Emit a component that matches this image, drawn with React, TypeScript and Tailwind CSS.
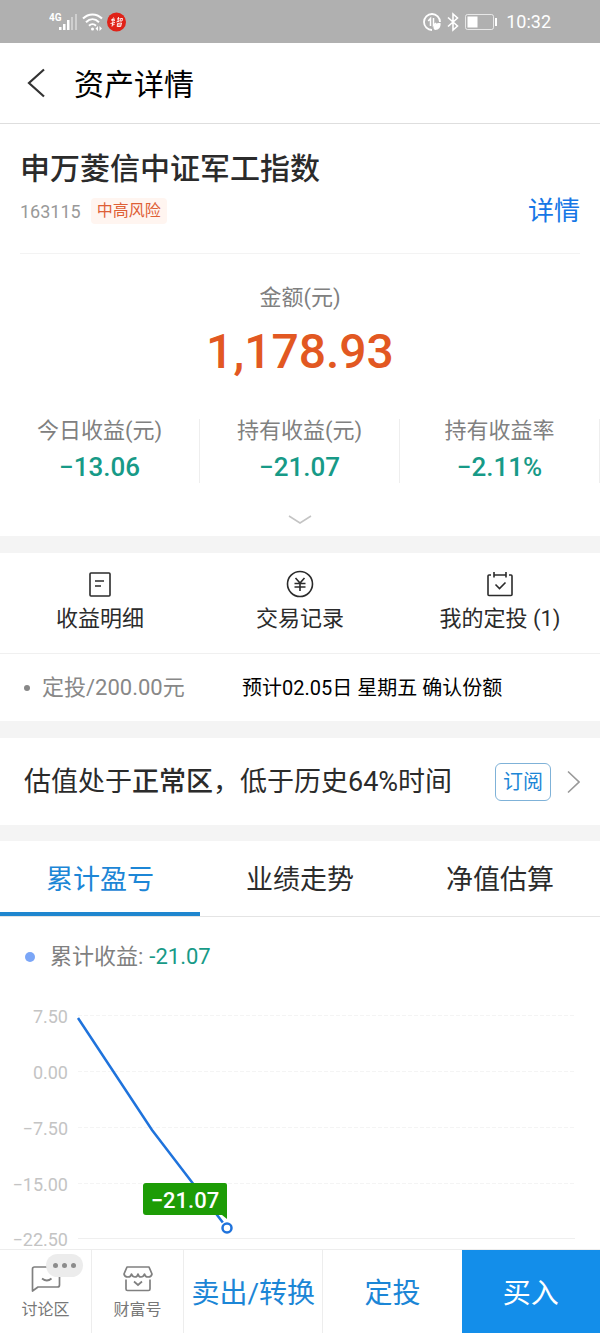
import React, { useState } from 'react';

const stats = [
  { label: '今日收益(元)', value: '−13.06' },
  { label: '持有收益(元)', value: '−21.07' },
  { label: '持有收益率', value: '−2.11%' },
];

const tabs = ['累计盈亏', '业绩走势', '净值估算'];

const axis = [
  { label: '7.50', y: 20 },
  { label: '0.00', y: 76 },
  { label: '−7.50', y: 132 },
  { label: '−15.00', y: 188 },
  { label: '−22.50', y: 243 },
];

const StatusBar: React.FC = () => (
  <div className="flex h-[43px] items-center justify-between bg-[#b0b0b0] px-[49px] text-white">
    <div className="flex items-center gap-1">
      <svg width="29" height="20" viewBox="0 0 29 20" fill="currentColor" aria-hidden="true">
        <text x="0" y="9" fontSize="10" fontWeight="700" fontFamily="Roboto, sans-serif">4G</text>
        <rect x="10" y="15" width="2.5" height="3" />
        <rect x="14" y="12" width="2.5" height="6" />
        <rect x="18" y="8" width="2.5" height="10" />
        <rect x="22" y="5" width="2" height="13" opacity="0.4" />
        <rect x="26" y="2" width="2" height="16" opacity="0.4" />
      </svg>
      <svg width="21" height="20" viewBox="0 0 21 20" fill="none" stroke="currentColor" strokeWidth="2" aria-hidden="true">
        <path d="M1 6.5C6.5 1 14.5 1 20 6.5" />
        <path d="M4 10.2C8 6.3 13 6.3 17 10.2" />
        <path d="M7 13.7C9 11.8 12 11.8 14 13.7" />
        <circle cx="10.5" cy="17" r="1.5" fill="currentColor" stroke="none" />
        <path d="M16 14v5l-2.5-2.5zM17.5 14v5l2.5-2.5z" fill="currentColor" stroke="none" />
      </svg>
      <svg width="19" height="20" viewBox="0 0 19 20" aria-hidden="true">
        <circle cx="9.5" cy="10" r="9.5" fill="#e02218" />
        <g stroke="#fff" strokeWidth="0.9" fill="none">
          <path d="M4 8l4-1M6.5 5.500L5 9l3-.5M3.500 11.500l4.500-1M6 9.500l-1 5M5 13l2.500-.5" />
          <path d="M10 7l2.500-.5M11.500 5l-.5 5M9.500 10l3-1M13.500 6.500l2 0-.5 2.500-2 0zM10.500 11.500l4-.5-.8 3.500-3.500 0zM10.500 13h3.500" />
        </g>
      </svg>
    </div>
    <div className="flex items-center gap-1">
      <svg width="19" height="20" viewBox="0 0 19 20" fill="none" stroke="currentColor" strokeWidth="1.8" aria-hidden="true">
        <path d="M17 10A8 8 0 1 0 9 18" />
        <path d="M7.5 14V6.500L5.200 9M10.500 6v7.500l2.500-2.500" strokeWidth="1.5" />
        <path d="M17.5 11c-5 0-7 1.500-7 4.500 0 1 .5 2 1.500 2.500 4 0 6-3 5.500-7z" fill="currentColor" stroke="none" />
      </svg>
      <svg width="14" height="20" viewBox="0 0 14 20" fill="none" stroke="currentColor" strokeWidth="1.6" aria-hidden="true">
        <path d="M2 5.500l9.500 8.500L7 18V2l4.500 4L2 14.500" />
      </svg>
      <svg width="34" height="20" viewBox="0 0 34 20" fill="none" stroke="currentColor" aria-hidden="true">
        <rect x="1.5" y="2.5" width="28" height="15" rx="2" opacity="0.7" />
        <rect x="3.5" y="4.5" width="10" height="11" fill="currentColor" stroke="none" />
        <path d="M32 6v8" strokeWidth="2" />
      </svg>
      <span className="pl-1 text-[18px] leading-6">10:32</span>
    </div>
  </div>
);

const ProfitChart: React.FC = () => (
  <svg viewBox="0 0 600 254" className="block w-full" role="img" aria-label="累计收益">
    {axis.map((tick, i) => (
      <g key={tick.label}>
        <line
          x1="78"
          x2="575"
          y1={tick.y + 0.5}
          y2={tick.y + 0.5}
          stroke={i === axis.length - 1 ? '#efefef' : '#f4f4f4'}
          strokeDasharray={i === axis.length - 1 ? undefined : '4 2'}
        />
        <text x="68" y={tick.y + 8} textAnchor="end" fontSize="18" fill="#c4c4c4">
          {tick.label}
        </text>
      </g>
    ))}
    <polyline points="78,23 152,135 227,233" fill="none" stroke="#1f73dc" strokeWidth="2.5" />
    <path d="M146 188h79a2 2 0 0 1 2 2v34l-5-4h-76a3 3 0 0 1-3-3v-26a3 3 0 0 1 3-3z" fill="#1d9c06" />
    <text x="185" y="213" textAnchor="middle" fontSize="22" fontWeight="500" fill="#fff">
      −21.07
    </text>
    <circle cx="227" cy="233" r="7" fill="#fff" />
    <circle cx="227" cy="233" r="4.5" fill="#fff" stroke="#1f73dc" strokeWidth="2.5" />
  </svg>
);

const App: React.FC = () => {
  const [active, setActive] = useState(tabs[0]);

  return (
    <div className="flex min-h-screen flex-col bg-white font-[Roboto,'Noto_Sans_CJK_SC',sans-serif] text-[#2b2b2b]">
      <StatusBar />

      <header className="flex h-[81px] items-center gap-7 border-b border-[#dedede] px-[27px]">
        <button type="button" aria-label="返回">
          <svg width="19" height="30" viewBox="0 0 19 30" fill="none" stroke="#333" strokeWidth="2.2">
            <path d="M17 1.500L2 15l15 13.500" />
          </svg>
        </button>
        <h1 className="pt-1 text-[30px] leading-10 text-black">资产详情</h1>
      </header>

      <section className="px-5 pt-[25px]">
        <h2 className="text-[30px] font-medium leading-10">申万菱信中证军工指数</h2>
        <div className="flex items-center justify-between border-b border-[#f3f3f3] pb-[22px] pt-[2px]">
          <div className="flex items-center gap-[10px]">
            <span className="text-[18px] text-[#999]">163115</span>
            <span className="rounded-sm bg-[#fff5f0] px-[6px] text-base leading-[26px] text-[#de6036]">中高风险</span>
          </div>
          <a href="#detail" className="text-[26px] leading-10 text-[#1677e6]">详情</a>
        </div>
      </section>

      <section className="flex flex-col items-center pt-7">
        <p className="text-[22px] leading-8 text-[#808080]">金额(元)</p>
        <p className="pt-2 text-5xl font-medium leading-[60px] text-[#e25822]">1,178.93</p>
        <div className="grid w-full grid-cols-3 pt-[37px]">
          {stats.map((stat) => (
            <div key={stat.label} className="flex flex-col items-center gap-2 border-r border-[#eee]">
              <span className="text-[22px] leading-6 text-[#808080]">{stat.label}</span>
              <span className="text-[26px] font-medium leading-8 text-[#179a87]">{stat.value}</span>
            </div>
          ))}
        </div>
        <button type="button" aria-label="展开" className="px-4 pb-3 pt-8">
          <svg width="24" height="9" viewBox="0 0 24 9" fill="none" stroke="#c4c4c4" strokeWidth="1.5">
            <path d="M1 1l11 7L23 1" />
          </svg>
        </button>
      </section>

      <section className="border-t-[17px] border-[#f4f4f4]">
        <div className="grid grid-cols-3 border-b border-[#f0f0f0] pb-[18px] pt-4 text-[22px] leading-8">
          <button type="button" className="flex flex-col items-center gap-1">
            <svg width="30" height="30" viewBox="0 0 30 30" fill="none" stroke="#2b2b2b" strokeWidth="1.6">
              <rect x="5" y="4" width="20" height="23" rx="1" />
              <path d="M10 12h9M10 17h6" />
            </svg>
            收益明细
          </button>
          <button type="button" className="flex flex-col items-center gap-1">
            <svg width="30" height="30" viewBox="0 0 30 30" fill="none" stroke="#2b2b2b" strokeWidth="1.6">
              <circle cx="15" cy="15" r="12.5" />
              <path d="M10.5 9l4.500 5 4.500-5M15 14v8M9.500 14.500h11M9.500 18h11" />
            </svg>
            交易记录
          </button>
          <button type="button" className="flex flex-col items-center gap-1">
            <svg width="30" height="30" viewBox="0 0 30 30" fill="none" stroke="#2b2b2b" strokeWidth="1.6">
              <path d="M9 6h12M24 6h2q1 0 1 1v18.500q0 1-1 1H4q-1 0-1-1V7q0-1 1-1h2M9 3v5.500M21 3v5.500" />
              <path d="M10.5 15.500l4 4 6-6" />
            </svg>
            我的定投 (1)
          </button>
        </div>
        <div className="flex h-[67px] items-center px-6">
          <span className="mr-3 h-[6px] w-[6px] rounded-full bg-[#888]" />
          <span className="w-[200px] text-[22px] text-[#888]">定投/200.00元</span>
          <span className="text-xl text-black">预计02.05日 星期五 确认份额</span>
        </div>
      </section>

      <section className="flex h-[104px] items-center justify-between border-t-[17px] border-[#f4f4f4] pl-6 pr-5">
        <p className="text-[27px] leading-10">
          估值处于<strong className="font-medium">正常区</strong>，低于历史64%时间
        </p>
        <div className="flex items-center gap-4">
          <button type="button" className="h-[38px] rounded-md border border-[#7fb2d8] px-[7px] text-xl text-[#1c86d6]">
            订阅
          </button>
          <svg width="13" height="24" viewBox="0 0 13 24" fill="none" stroke="#999" strokeWidth="1.6" aria-hidden="true">
            <path d="M1 1.500L12 12 1 22.500" />
          </svg>
        </div>
      </section>

      <section className="border-t-[16px] border-[#f4f4f4]">
        <div role="tablist" className="grid h-[76px] grid-cols-3 border-b border-[#e4e4e4]">
          {tabs.map((tab) => (
            <button
              key={tab}
              type="button"
              role="tab"
              aria-selected={tab === active}
              onClick={() => setActive(tab)}
              className={
                tab === active
                  ? 'border-b-4 border-[#1f86cf] pt-2 text-[27px] text-[#1c86d6]'
                  : 'border-b-4 border-transparent pt-2 text-[27px]'
              }
            >
              {tab}
            </button>
          ))}
        </div>
        <div className="flex items-center px-[25px] pb-[22px] pt-6 text-[22px] leading-8 text-[#808080]">
          <span className="mr-[15px] h-[10px] w-[10px] rounded-full bg-[#7ba6f7]" />
          累计收益:
          <span className="pl-[6px] text-[#179a87]">-21.07</span>
        </div>
        <ProfitChart />
      </section>

      <nav className="sticky bottom-0 flex h-[84px] border-t border-[#ededed] bg-white text-[28px] text-[#1c86d6]">
        <button type="button" className="relative flex w-[92px] flex-col items-center gap-1 border-r border-[#ededed] pt-[14px] text-base leading-6 text-[#777]">
          <svg width="30" height="30" viewBox="0 0 30 30" fill="none" stroke="#808080" strokeWidth="1.7">
            <path d="M1.5 27V5q0-2 2-2h23q2 0 2 2v16q0 2-2 2H7z" strokeLinejoin="round" />
            <path d="M11 14.500q5 4 9.500 0" />
          </svg>
          讨论区
          <span className="absolute right-2 top-1 flex h-[23px] w-[37px] items-center justify-center gap-1 rounded-full bg-[#ececec]">
            <i className="h-[5px] w-[5px] rounded-full bg-[#8c8c8c]" />
            <i className="h-[5px] w-[5px] rounded-full bg-[#8c8c8c]" />
            <i className="h-[5px] w-[5px] rounded-full bg-[#8c8c8c]" />
          </span>
        </button>
        <button type="button" className="flex w-[92px] flex-col items-center gap-1 border-r border-[#ededed] pt-[14px] text-base leading-6 text-[#777]">
          <svg width="30" height="30" viewBox="0 0 30 30" fill="none" stroke="#808080" strokeWidth="1.7">
            <path d="M4 3h22l3 7q-.5 3-4 3-3 0-3.500-3-1 3-3.500 3T15 10q-.5 3-3 3t-3.500-3Q8 13 5 13q-3.500 0-4-3z" strokeLinejoin="round" />
            <path d="M3 15.500V25q0 1.500 1.500 1.500h21q1.500 0 1.500-1.500v-9.500M11 17.500l4 3.500 4-3.500" />
          </svg>
          财富号
        </button>
        <button type="button" className="flex-1 border-r border-[#ededed] pt-1">卖出/转换</button>
        <button type="button" className="flex-1 pt-1">定投</button>
        <button type="button" className="flex-1 bg-[#138eea] pt-1 text-white">买入</button>
      </nav>
    </div>
  );
};

export default App;
